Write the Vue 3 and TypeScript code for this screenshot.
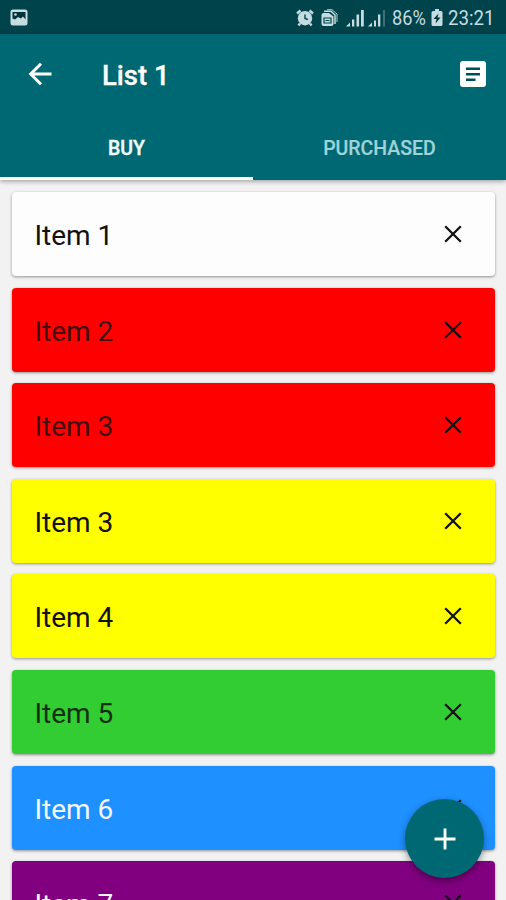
<script setup lang="ts">
interface ListItem {
  id: number
  label: string
  tone: string
}

const items: ListItem[] = [
  { id: 1, label: 'Item 1', tone: 'white' },
  { id: 2, label: 'Item 2', tone: 'red' },
  { id: 3, label: 'Item 3', tone: 'red' },
  { id: 4, label: 'Item 3', tone: 'yellow' },
  { id: 5, label: 'Item 4', tone: 'yellow' },
  { id: 6, label: 'Item 5', tone: 'green' },
  { id: 7, label: 'Item 6', tone: 'blue' },
  { id: 8, label: 'Item 7', tone: 'purple' },
]
</script>

<template>
  <div class="screen">
    <div class="status">
      <svg class="photo" width="18" height="17" viewBox="0 0 18 17">
        <rect x="0.5" y="0.5" width="17" height="16" rx="2.5" fill="#c5dce0" />
        <path d="M2.500 3h13v7.500l-2.500-3-2 2-3-1.500L5 10.500l-2.500-1z" fill="#00333a" />
        <circle cx="5.500" cy="5.500" r="1.300" fill="#c5dce0" />
      </svg>
      <div class="status-right">
        <svg width="18" height="18" viewBox="0 0 18 18">
          <path d="M1 4.500 4.500 1.500M17 4.500 13.500 1.500M4 14.500 2.500 16.500M14 14.500l1.500 2" stroke="#c5dce0" stroke-width="2.400" />
          <circle cx="9" cy="9.200" r="7.200" fill="#c5dce0" />
          <path d="M9 5.500v4l2.800 1" fill="none" stroke="#00434a" stroke-width="1.400" />
        </svg>
        <svg class="docs" width="17" height="18" viewBox="0 0 17 18">
          <path d="M.5 6a2 2 0 0 1 2-2H8l4.500 3.500V15a2 2 0 0 1-2 2h-8a2 2 0 0 1-2-2z" fill="#c5dce0" />
          <path d="M3 2.200h7L14 6v9" fill="none" stroke="#c5dce0" stroke-width="1.500" />
          <path d="M6 .7h5L16 5v8" fill="none" stroke="#c5dce0" stroke-width=".9" />
          <path d="M3 9h7v5H3zM4.500 11.500h4" fill="none" stroke="#00434a" stroke-width="1.200" />
        </svg>
        <svg class="signal" width="19" height="18" viewBox="0 0 19 18">
          <path d="M0 17.500 4 13.500v4zM6 17.500v-7h2.300v7zM10.500 17.500v-12h2.600v12zM15 17.500V1h2.800v16.500z" fill="#c5dce0" />
        </svg>
        <svg class="signal-two" width="19" height="18" viewBox="0 0 19 18">
          <path d="M0 17.500 4 13.500v4zM6 17.500v-6h2v6zM10 17.500v-12h2.300v12z" fill="#c5dce0" />
          <path d="M15 17.500V1h2v16.500z" fill="#3d7078" />
        </svg>
        <span class="percent">86%</span>
        <svg class="battery" width="12" height="18" viewBox="0 0 12 18">
          <path d="M4 0h4v2h2a1.500 1.500 0 0 1 1.500 1.500v12A1.500 1.500 0 0 1 10 17H2A1.500 1.500 0 0 1 .5 15.500v-12A1.500 1.500 0 0 1 2 2h2z" fill="#c5dce0" />
          <path d="M7.500 4.500 2.500 10h3l-1 4.500 5-6h-3z" fill="#00333a" />
        </svg>
        <span class="clock">23:21</span>
      </div>
    </div>

    <header class="header">
      <div class="toolbar">
        <svg class="back" width="24" height="24" viewBox="0 0 24 24">
          <path d="M23.500 12H3M13 1.700 2.700 12 13 22.300" fill="none" stroke="#fff" stroke-width="3" />
        </svg>
        <h1 class="title">List 1</h1>
        <svg class="note" width="26" height="26" viewBox="0 0 26 26">
          <rect width="26" height="26" rx="3" fill="#fff" />
          <path d="M6 7.700h14M6 13.200h14M6 18.700h9.500" stroke="#004e5c" stroke-width="2.500" />
        </svg>
      </div>
      <nav class="tabs">
        <div class="tab active">BUY</div>
        <div class="tab">PURCHASED</div>
      </nav>
    </header>

    <main class="list">
      <div v-for="item in items" :key="item.id" class="card" :class="item.tone">
        <span class="label">{{ item.label }}</span>
        <svg class="remove" width="18" height="18" viewBox="0 0 18 18">
          <path d="M1.200 1.200 16.800 16.800M16.800 1.200 1.200 16.800" stroke="currentColor" stroke-width="2.300" />
        </svg>
      </div>
    </main>

    <button class="fab" aria-label="Add item">
      <svg width="22" height="22" viewBox="0 0 22 22">
        <path d="M11 .5v21M.5 11h21" stroke="#fff" stroke-width="2.900" />
      </svg>
    </button>
  </div>
</template>

<style>
body {
  margin: 0;
  overflow: hidden;
}
</style>

<style scoped>
.screen {
  position: relative;
  display: flex;
  flex-direction: column;
  width: 506px;
  height: 900px;
  overflow: hidden;
  background: #f2f2f2;
  font-family: Roboto, sans-serif;
}
.status {
  display: flex;
  flex: none;
  box-sizing: border-box;
  align-items: center;
  justify-content: space-between;
  height: 34px;
  padding: 1px 12px 0 10px;
  background: #00434a;
  color: #c5dce0;
}
.status-right {
  display: flex;
  align-items: center;
}
.docs {
  margin-left: 7px;
}
.signal {
  margin-left: 8px;
}
.signal-two {
  margin-left: 3px;
}
.percent,
.clock {
  display: block;
  font-size: 21px;
  line-height: 32px;
  white-space: nowrap;
  transform-origin: left;
}
.percent {
  width: 34px;
  margin-left: 5px;
  transform: scaleX(0.87);
}
.battery {
  margin-left: 5px;
}
.clock {
  width: 46px;
  margin-left: 5px;
  transform: scaleX(0.89);
}
.header {
  position: relative;
  flex: none;
  height: 146px;
  background: #006873;
  box-shadow: 0 1px 5px rgba(0, 0, 0, 0.4);
}
.toolbar {
  display: flex;
  box-sizing: border-box;
  align-items: center;
  height: 80px;
  padding: 0 20px 1px 28px;
}
.title {
  margin: 4px auto 0 50px;
  color: #fff;
  font-size: 27.500px;
  font-weight: 500;
  line-height: 32px;
  -webkit-text-stroke: 0.3px #fff;
}
.tabs {
  display: flex;
  height: 66px;
}
.tab {
  box-sizing: border-box;
  width: 253.500px;
  padding-top: 20px;
  color: #9fd3d8;
  font-size: 19.500px;
  font-weight: 500;
  line-height: 30px;
  text-align: center;
  -webkit-text-stroke: 0.2px currentColor;
}
.tab.active {
  border-bottom: 3px solid #fff;
  color: #effcfc;
  -webkit-text-stroke: 0.4px currentColor;
}
.list {
  display: flex;
  flex-direction: column;
  gap: 11.600px;
  padding: 12px 11px 0 12px;
}
.card {
  display: flex;
  flex: none;
  box-sizing: border-box;
  align-items: center;
  justify-content: space-between;
  height: 84px;
  padding: 0 33px 0 22.500px;
  border-radius: 4px;
  color: #111;
  box-shadow: 0 1px 3px rgba(0, 0, 0, 0.4);
}
.label {
  padding-top: 4px;
  font-size: 28px;
  line-height: 34px;
}
.white {
  background: #fdfdfd;
}
.red {
  background: #f00;
}
.red .label {
  color: #401010;
}
.yellow {
  background: #ff0;
}
.green {
  background: #32cd32;
}
.green .label {
  color: #12300f;
}
.blue {
  background: #1e90ff;
}
.purple {
  background: #800080;
}
.blue .label,
.purple .label {
  color: #f2f8ff;
}
.fab {
  position: absolute;
  right: 22px;
  bottom: 22px;
  display: flex;
  align-items: center;
  justify-content: center;
  width: 79px;
  height: 79px;
  padding: 0;
  border: 0;
  border-radius: 50%;
  background: #006873;
  box-shadow: 0 3px 7px rgba(0, 0, 0, 0.4);
}
</style>
